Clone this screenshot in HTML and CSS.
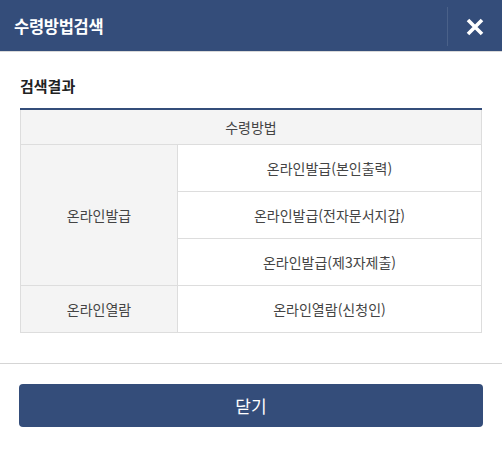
FILE: index.html
```html
<!DOCTYPE html>
<html lang="ko">
<head>
<meta charset="utf-8">
<link rel="stylesheet" href="styles.css">
</head>
<body>
<div class="modal">
  <header class="modal-head">
    <h1 class="modal-title">수령방법검색</h1>
    <button class="close-btn" aria-label="닫기">
      <svg width="18" height="18" viewBox="0 0 18 18"><path d="M2 2 L16 16 M16 2 L2 16" stroke="#fff" stroke-width="3.6" stroke-linecap="butt"/></svg>
    </button>
  </header>
  <section class="modal-body">
    <h2 class="section-title">검색결과</h2>
    <table class="result">
      <thead>
        <tr><th colspan="2">수령방법</th></tr>
      </thead>
      <tbody>
        <tr><th rowspan="3" class="cat">온라인발급</th><td>온라인발급(본인출력)</td></tr>
        <tr><td>온라인발급(전자문서지갑)</td></tr>
        <tr><td>온라인발급(제3자제출)</td></tr>
        <tr><th class="cat">온라인열람</th><td>온라인열람(신청인)</td></tr>
      </tbody>
    </table>
  </section>
  <footer class="modal-foot">
    <button class="btn-close">닫기</button>
  </footer>
</div>
</body>
</html>
```
FILE: styles.css
```css
* { box-sizing: border-box; }
html, body { margin: 0; padding: 0; background: #fff; }
body { font-family: "Noto Sans CJK KR", "Noto Sans", sans-serif; color: #444; }
.modal { width: 502px; }
.modal-head {
  height: 52px;
  background: #344d7a;
  border-bottom: 1px solid #d9d9d9;
  display: flex;
  align-items: center;
  justify-content: space-between;
  padding-left: 14px;
}
.modal-title {
  margin: 0;
  font-size: 16.5px;
  font-weight: 700;
  color: #fff;
  letter-spacing: -0.3px;
}
.close-btn {
  width: 55px;
  height: 39px;
  margin-top: 2px;
  border: 0;
  border-left: 1px solid #4a6189;
  background: transparent;
  display: flex;
  align-items: center;
  justify-content: center;
  padding: 0;
  cursor: pointer;
}
.modal-body { padding: 20px 20px 30px; border-bottom: 1px solid #d5d5d5; }
.section-title {
  margin: 0;
  font-size: 15px;
  font-weight: 700;
  color: #222;
  line-height: 28px;
  padding-bottom: 8px;
  border-bottom: 2px solid #344d7a;
}
.result {
  width: 100%;
  border-collapse: collapse;
  font-size: 14px;
  color: #444;
}
.result th, .result td {
  border: 1px solid #ddd;
  font-weight: 400;
  text-align: center;
  height: 47px;
  padding: 0;
}
.result thead th { background: #f4f4f4; height: 34px; border-top: 0; }
.result .cat { background: #f4f4f4; width: 157px; }
.modal-foot { padding: 20px 19px; }
.btn-close {
  width: 100%;
  height: 43px;
  border: 0;
  border-radius: 4px;
  background: #344d7a;
  color: #fff;
  font-family: inherit;
  font-size: 17px;
  cursor: pointer;
}
```
